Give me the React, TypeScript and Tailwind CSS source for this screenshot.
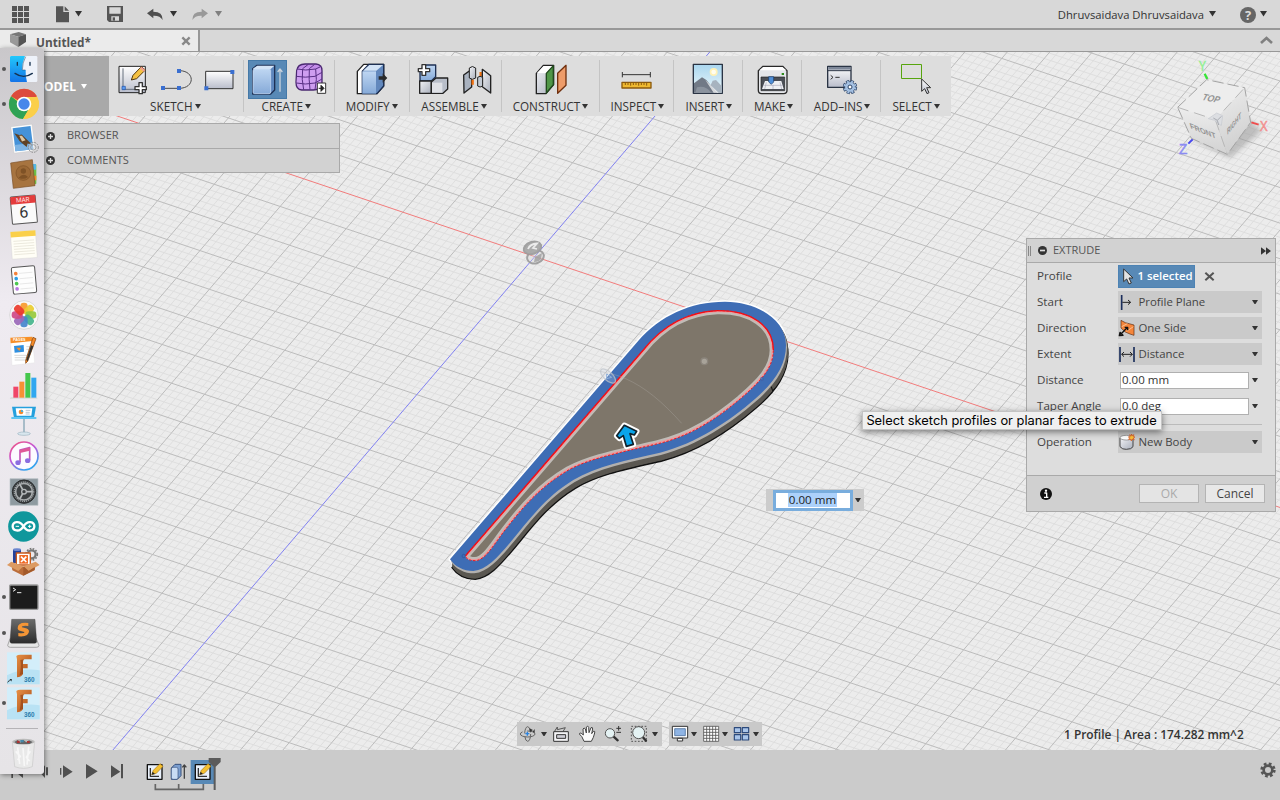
import React from "react";

type P = { children?: React.ReactNode };

/* Icon drawn on a three-units-per-pixel artboard. */
function Ico({ vb, children, className = "" }: P & { vb: string; className?: string }) {
  const [, , w, h] = vb.split(" ").map(Number);
  return (
    <svg width={w / 3} height={h / 3} viewBox={vb} className={`block shrink-0 overflow-visible ${className}`} strokeLinejoin="round">
      {children}
    </svg>
  );
}

function Caret({ className = "text-[#333]", s = 6 }: { className?: string; s?: number }) {
  return (
    <svg width={s} height={s * 0.8} viewBox="0 0 10 8" className={`block shrink-0 ${className}`}>
      <path d="M0 0H10L5 8Z" fill="currentColor" />
    </svg>
  );
}

const O = { x: 534.8, y: 256.6 };
const A = { x: 33.0, y: 11.11 };
const B = { x: -23.6, y: 27.6 };

function Grid() {
  const minor: string[] = [];
  const major: string[] = [];
  for (let k = -200; k <= 200; k++) {
    const t = k / 5;
    const a = `M${(O.x + t * B.x - 45 * A.x).toFixed(1)} ${(O.y + t * B.y - 45 * A.y).toFixed(1)}l${90 * A.x} ${90 * A.y}`;
    const b = `M${(O.x + t * A.x - 45 * B.x).toFixed(1)} ${(O.y + t * A.y - 45 * B.y).toFixed(1)}l${90 * B.x} ${90 * B.y}`;
    if (k === 0) continue;
    (k % 5 === 0 ? major : minor).push(a, b);
  }
  return (
    <g fill="none" strokeWidth="1">
      <path d={minor.join("")} stroke="#dddddd" strokeWidth="0.9" />
      <path d={major.join("")} stroke="#bcbcbc" />
      <path d={`M${O.x - 20 * A.x} ${O.y - 20 * A.y}L${O.x + 30 * A.x} ${O.y + 30 * A.y}`} stroke="#f27c7c" />
      <path d={`M${O.x - 20 * B.x} ${O.y - 20 * B.y}L${O.x + 20 * B.x} ${O.y + 20 * B.y}`} stroke="#8080f0" />
    </g>
  );
}

const OUTER =
  "M60 808L625 152C690 78 780 35 885 35C985 35 1068 92 1068 165C1068 225 1035 275 975 327C900 392 800 460 690 488C590 511 500 528 430 570C340 625 290 700 240 758C200 805 170 838 130 843C100 843 75 830 60 808Z";
const INNER =
  "M106 798L640 180C700 105 770 66 862 62C960 60 1030 105 1030 180C1030 235 990 275 930 327C860 385 780 440 680 462C560 490 480 505 415 540C330 590 275 655 225 720C190 765 165 812 135 812C120 812 110 808 106 798Z";

function Racket() {
  return (
    <g transform="translate(430 290) scale(0.33333)">
      <clipPath id="inner"><path d={INNER} /></clipPath>
      <path d={OUTER} fill="none" stroke="#ffffff" strokeWidth="9" strokeLinejoin="round" />
      {[25, 22, 19, 16, 13, 10].map((d) => (
        <path key={d} d={OUTER} transform={`translate(${6} ${d})`} fill={d === 25 ? "#55534e" : "#5b5852"} stroke={d === 25 ? "#111" : "none"} strokeWidth="4" />
      ))}
      <path d={OUTER} transform="translate(3 7)" fill="#b2b0ae" />
      <path d={OUTER} fill="#3e6db5" />
      <path d={INNER} fill="#7e766a" />
      <path d={INNER} fill="none" stroke="#c0bcb7" strokeWidth="22" clipPath="url(#inner)" />
      <path d={INNER} fill="none" stroke="#ee9a9c" strokeWidth="10" clipPath="url(#inner)" />
      <path d="M106 798L640 180C700 105 770 66 862 62C960 60 1030 105 1030 180" fill="none" stroke="#ee0a12" strokeWidth="4" />
      <path d={INNER} fill="none" stroke="#ef1820" strokeWidth="3" strokeDasharray="7 5" />
      <path d="M410 248C540 225 640 270 755 400" fill="none" stroke="#b5b2ae" strokeWidth="3" opacity=".3" />
      <ellipse cx="534" cy="258" rx="28" ry="13" transform="rotate(42 534 258)" fill="#c8d2e0" fillOpacity=".3" stroke="#bfc5cc" strokeWidth="4" opacity=".75" />
      <path d="M530 252L545 262L530 266Z" fill="none" stroke="#8eafd9" strokeWidth="3" />
      <circle cx="823" cy="214" r="10" fill="#a8a399" stroke="#8b857c" strokeWidth="4" />
      <circle cx="996" cy="267" r="5" fill="none" stroke="#4460a6" strokeWidth="2" />
      <circle cx="101" cy="798" r="5" fill="none" stroke="#2c519a" strokeWidth="2" />
      <path d="M1024 290L1028 303L1034 295" fill="none" stroke="#111" strokeWidth="3" />
      <path d="M583 406L620 424L613 435L600 431L610 463L589 469L580 437L568 445L560 437Z" fill="none" stroke="#fff" strokeWidth="17" strokeLinejoin="round" />
      <path d="M583 406L620 424L613 435L600 431L610 463L589 469L580 437L568 445L560 437Z" fill="#0aa5ea" stroke="#10222c" strokeWidth="5" strokeLinejoin="round" />
    </g>
  );
}

function Viewport() {
  return (
    <svg width="1280" height="698" viewBox="0 52 1280 698" className="absolute inset-0 block">
      <rect y="52" width="1280" height="698" fill="#ececec" />
      <Grid />
      <g fill="none" stroke="#9a9a9a" strokeWidth="2" opacity=".9">
        <ellipse cx="535.500" cy="257" rx="8.500" ry="6.500" transform="rotate(-18 535 257)" fill="#d5d5d5" fillOpacity=".4" />
        <ellipse cx="532.500" cy="248" rx="9" ry="6" transform="rotate(-18 532 248)" fill="#a4a4a4" />
        <path d="M528 249Q530 244 537 243.500L533 248L537 249" stroke="#ececec" strokeWidth="1.800" />
        <path d="M535 257L542 253L541 259Q539 262 534 262Z" fill="#a4a4a4" stroke="none" />
      </g>
      <Racket />
    </svg>
  );
}

function ViewCube() {
  return (
    <svg width="110" height="115" viewBox="450 160 330 345" className="absolute left-[1170px] top-[1px] block font-['Liberation_Sans',sans-serif]">
      <defs>
        <filter id="soft" x="-20%" y="-20%" width="140%" height="140%"><feGaussianBlur stdDeviation="8" /></filter>
        <linearGradient id="cf" x2="0" y2="1"><stop stopColor="#ededed" /><stop offset="1" stopColor="#d2d2d2" /></linearGradient>
        <linearGradient id="cr" x2=".3" y2="1"><stop stopColor="#eeeeee" /><stop offset="1" stopColor="#d0d0d0" /></linearGradient>
      </defs>
      <path d="M520 420L630 475L725 395L690 360Z" fill="#999" opacity=".55" filter="url(#soft)" />
      <path d="M554 222L562 238" stroke="#36e436" strokeWidth="7" />
      <path d="M694 368L716 375" stroke="#ef4c4c" strokeWidth="6" />
      <path d="M519 418L505 432" stroke="#4949ee" strokeWidth="6" />
      <path d="M473 323L560 240L674 264L586 360Z" fill="#ededed" />
      <path d="M473 323L586 360L622 464L514 416Z" fill="url(#cf)" />
      <path d="M586 360L674 264L692 368L622 464Z" fill="url(#cr)" />
      <path d="M473 323L560 240L674 264L692 368L622 464L514 416Z" fill="none" stroke="#a4a4a4" strokeWidth="3" strokeDasharray="34 12" />
      <path d="M473 323L586 360L674 264M586 360L622 464" fill="none" stroke="#b8b8b8" strokeWidth="3" strokeDasharray="34 18" />
      <path d="M565 357L590 340L608 348L604 378L584 362Z" fill="#dcdee2" stroke="#c6c9ce" strokeWidth="2" />
      <path d="M580 355L592 362L604 350M592 362L596 376" fill="none" stroke="#a8abb1" strokeWidth="3" />
      <g fontWeight="bold" fill="#939393">
        <text transform="matrix(.8 .16 -.45 .85 544 300)" fontSize="31">TOP</text>
        <text transform="matrix(.75 .31 .25 .8 512 386)" fontSize="30">FRONT</text>
        <text transform="matrix(.5 -.62 .05 .95 622 406)" fontSize="27">RIGHT</text>
      </g>
      <g fontSize="42" strokeWidth="1.500">
        <text x="536" y="213" fill="#93f093" stroke="#93f093" textLength="22" lengthAdjust="spacingAndGlyphs">Y</text>
        <text x="719" y="394" fill="#f29090" stroke="#f29090" textLength="24" lengthAdjust="spacingAndGlyphs">X</text>
        <text x="477" y="463" fill="#8b8bf2" stroke="#8b8bf2" textLength="25" lengthAdjust="spacingAndGlyphs">Z</text>
      </g>
    </svg>
  );
}

const Defs = () => (
  <svg width="0" height="0" className="absolute">
    <defs>
      <linearGradient id="wh" x2="0" y2="1"><stop stopColor="#fff" /><stop offset="1" stopColor="#b9bdcb" /></linearGradient>
      <linearGradient id="gy" x2="1" y2="1"><stop stopColor="#f2f3f6" /><stop offset="1" stopColor="#a9afbb" /></linearGradient>
      <linearGradient id="bl" x2="0" y2="1"><stop stopColor="#bed6f2" /><stop offset="1" stopColor="#86aad8" /></linearGradient>
      <linearGradient id="sky" x2="0" y2="1"><stop stopColor="#a9d6ef" /><stop offset="1" stopColor="#eef8fb" /></linearGradient>
      <linearGradient id="cg" x2="0" y2="1"><stop stopColor="#22c8fb" /><stop offset="1" stopColor="#1474e8" /></linearGradient>
      <linearGradient id="it" x2=".6" y2="1"><stop stopColor="#f4547a" /><stop offset=".5" stopColor="#c457d8" /><stop offset="1" stopColor="#32a4ee" /></linearGradient>
      <linearGradient id="dk" x2="0" y2="1"><stop stopColor="#6c6c6c" /><stop offset="1" stopColor="#2c2c2c" /></linearGradient>
      <linearGradient id="or" x2="1" y2="1"><stop stopColor="#e89045" /><stop offset="1" stopColor="#a74c18" /></linearGradient>
    </defs>
  </svg>
);

const NAVY = "#1e3054";

const groups: { label: string; w: string; icons: React.ReactNode; gap: string; shift?: string }[] = [
  {
    label: "SKETCH", w: "w-[135px]", gap: "gap-[12px]", shift: "pr-[2px]",
    icons: (
      <>
        <Ico vb="352 189 90 96">
          <rect x="358" y="199" width="79" height="79" fill="url(#wh)" stroke="#222" strokeWidth="3" />
          <path d="M370 205V268H430" fill="none" stroke="#66707f" strokeWidth="3" />
          <rect x="367" y="259" width="10" height="10" fill="#5b9bf0" stroke="#1d4fa8" strokeWidth="2" />
          <path d="M395 240L400 226L425 200L437 210L411 236Z" fill="#f5c142" stroke="#51370f" strokeWidth="3" />
          <path d="M425 200L437 210L432 215L420 205Z" fill="#f0a090" />
          <path d="M418 248h10v12h12v9h-12v12h-10v-12h-12v-9h12Z" fill="#fff" stroke="#333" strokeWidth="4" />
        </Ico>
        <Ico vb="477 189 99 96">
          <path d="M489 265H537C585 265 586 214 540 212" fill="none" stroke="#4b4b4b" strokeWidth="3" />
          <path d="M483 258h12v12h-12ZM531 258h12v12h-12ZM531 207h12v12h-12Z" fill="#3a6fd0" />
        </Ico>
        <Ico vb="611 189 93 96">
          <rect x="616" y="214" width="82" height="52" fill="url(#wh)" stroke="#333" strokeWidth="3" />
          <path d="M612 259h12v12h-12ZM690 210h12v12h-12Z" fill="#3a6fd0" />
        </Ico>
      </>
    ),
  },
  {
    label: "CREATE", w: "w-[91px]", gap: "", shift: "pr-[6px]",
    icons: (
      <div className="flex h-[40px] items-end gap-[8px] pr-[4px]">
        <div className="flex h-[39px] w-[39px] items-center justify-center border border-[#4579a7] bg-[#5889b6]">
          <Ico vb="755 190 96 96">
            <path d="M760 204L773 194H826V268L814 280H760Z" fill="#5d86bd" stroke={NAVY} strokeWidth="4" />
            <path d="M761 204L774 195H825L814 205H761Z" fill="#d5e4f6" />
            <rect x="761" y="205" width="53" height="74" rx="5" fill="url(#bl)" stroke="#cfe1f7" strokeWidth="2" />
            <path d="M842 273V205M835 214L842 205L849 214" fill="none" stroke="#c9d3dd" strokeWidth="4" />
          </Ico>
        </div>
        <Ico vb="885 190 96 96" className="mb-[4px]">
          <path d="M890 213Q893 193 915 193H948Q966 195 966 213V250Q962 270 940 271H905Q888 270 888 248Z" fill="#c28ce8" stroke="#4a2870" strokeWidth="4" />
          <path d="M892 210Q912 198 948 208L963 202V248L948 268H905Q890 265 890 246Z" fill="#d3a5f4" opacity=".7" />
          <path d="M889 230Q915 235 945 230L966 218M889 250Q915 256 945 250L966 238M908 207Q904 240 911 270M928 207Q926 240 930 270M947 208Q952 240 945 270M891 208Q915 214 947 208L964 200M908 207L925 194M928 207L944 194" fill="none" stroke="#593085" strokeWidth="3" />
          <rect x="952" y="250" width="25" height="31" fill="#fff" stroke="#333" strokeWidth="3" />
          <path d="M956 266H966M963 257L972 266L963 275Z" fill="#222" stroke="#222" strokeWidth="3" />
        </Ico>
      </div>
    ),
  },
  {
    label: "MODIFY", w: "w-[75px]", gap: "", shift: "pr-[1px]",
    icons: (
      <Ico vb="78 39 96 96">
        <path d="M82 64L101 43H161V108L141 131H82Z" fill="#fff" stroke="#222" strokeWidth="4" />
        <path d="M97 64L117 43H161V108L141 131H97Z" fill="#6288bd" stroke={NAVY} strokeWidth="4" />
        <path d="M97 64H138V131H97Z" fill="url(#bl)" />
        <path d="M99 62L118 45H159L139 62Z" fill="#d3e3f6" />
        <path d="M146 79H158V70L172 84L158 98V89H146Z" fill="#2a2a2a" />
      </Ico>
    ),
  },
  {
    label: "ASSEMBLE", w: "w-[92px]", gap: "gap-[13px] pr-[2px]", shift: "pr-[3px]",
    icons: (
      <>
        <Ico vb="264 39 93 96">
          <path d="M270 60L287 45H317V80L304 93H270Z" fill="url(#bl)" stroke={NAVY} strokeWidth="4" />
          <path d="M269 93H304V130H269Z" fill="url(#gy)" stroke="#222" strokeWidth="4" />
          <path d="M304 96L318 84H353V117L339 130H304Z" fill="#b8bec9" stroke="#222" strokeWidth="4" />
          <path d="M306 98H337V128H306Z" fill="#dfe1e6" />
          <path d="M276 44h11v12h12v9h-12v11h-11v-11h-11v-9h11Z" fill="#fff" stroke="#333" strokeWidth="4" />
        </Ico>
        <Ico vb="396 39 90 96">
          <path d="M401 75L425 58V111L402 129Z" fill="#a9b2bf" stroke="#222" strokeWidth="4" />
          <path d="M418 54Q427 45 437 54V84Q427 92 418 84Z" fill="url(#gy)" stroke="#222" strokeWidth="3" />
          <path d="M428 89V104M452 66V80" stroke="#f07010" strokeWidth="7" />
          <path d="M457 58L482 77V129L457 110Z" fill="url(#gy)" stroke="#222" strokeWidth="4" />
          <path d="M443 82Q450 76 458 82V108Q450 114 443 108Z" fill="#c4cbd5" stroke="#222" strokeWidth="3" />
        </Ico>
      </>
    ),
  },
  {
    label: "CONSTRUCT", w: "w-[99px]", gap: "", shift: "pr-[1px]",
    icons: (
      <Ico vb="615 39 96 96">
        <path d="M619 70L640 46H671V104L648 131H619Z" fill="url(#gy)" stroke="#222" strokeWidth="4" />
        <path d="M621 69L641 48H668L648 70Z" fill="#fff" />
        <path d="M649 70L670 47V104L649 129Z" fill="#4f9647" stroke="#21491e" strokeWidth="4" />
        <path d="M683 70L708 46V106L683 130Z" fill="#ee9c69" stroke="#70300e" strokeWidth="4" />
      </Ico>
    ),
  },
  {
    label: "INSPECT", w: "w-[74px]", gap: "pr-[2px]", shift: "",
    icons: (
      <Ico vb="-60 39 96 96">
        <path d="M-53 74H31M-53 66V82M31 66V82" stroke="#333" strokeWidth="3" />
        <rect x="-54" y="97" width="87" height="17" fill="#efb92f" stroke="#8c5a0c" strokeWidth="4" />
        <path d="M-44 98v7M-36 98v7M-28 98v9M-20 98v7M-12 98v7M-4 98v9M4 98v7M12 98v7M20 98v9" stroke="#8c5a0c" strokeWidth="3" />
      </Ico>
    ),
  },
  {
    label: "INSERT", w: "w-[69px]", gap: "pr-[1px]",
    icons: (
      <Ico vb="160 39 96 96">
        <rect x="164" y="43" width="87" height="87" fill="url(#sky)" stroke="#2a3444" strokeWidth="4" />
        <circle cx="225" cy="66" r="12" fill="#fff2b8" /><circle cx="225" cy="66" r="7" fill="#fffdf0" />
        <path d="M205 128L222 92L232 90L249 108V128Z" fill="#a7b3bf" />
        <path d="M166 100L190 82L203 90L235 128H166Z" fill="#717986" />
        <path d="M200 90L210 100L240 128H225Z" fill="#fff" opacity=".7" />
        <path d="M175 112Q200 105 218 128H170Z" fill="#8b939e" />
      </Ico>
    ),
  },
  {
    label: "MAKE", w: "w-[59px]", gap: "pl-[1px]", shift: "pl-[2px]",
    icons: (
      <Ico vb="352 39 96 96">
        <path d="M356 62L370 49H429L442 62V121Q442 131 432 131H366Q356 131 356 121Z" fill="#e4e6ea" stroke="#2a2a2a" strokeWidth="4" />
        <path d="M359 61L371 51H428L440 61Z" fill="#fff" />
        <path d="M364 81H435V122H364Z" fill="#4a4e56" stroke="#222" strokeWidth="2" />
        <path d="M376 93H425L432 117H367Z" fill="#eef0f3" />
        <path d="M372 106H429M380 97L375 117M400 105V117M421 97L426 117" stroke="#aab" strokeWidth="2" />
        <path d="M387 80H402V96L395 103L387 96Z" fill="#4f8fd8" stroke="#173866" strokeWidth="2" />
        <rect x="426" y="69" width="7" height="6" fill="#2c8a1a" />
      </Ico>
    ),
  },
  {
    label: "ADD–INS", w: "w-[79px]", gap: "pl-[1px]", shift: "pl-[1px]",
    icons: (
      <Ico vb="558 39 96 96">
        <rect x="563" y="49" width="70" height="63" fill="url(#wh)" stroke="#2a3444" strokeWidth="4" />
        <rect x="565" y="51" width="66" height="8" fill="#7d8798" /><path d="M563 62H633" stroke="#2a3444" strokeWidth="3" />
        <path d="M572 76L579 82L572 88M586 82H599" fill="none" stroke="#333" strokeWidth="3" />
        <circle cx="630" cy="111" r="16" fill="none" stroke="#2c4468" strokeWidth="11" strokeDasharray="8.500 4.060" />
        <circle cx="630" cy="111" r="16" fill="#a4c0e2" stroke="#2c4468" strokeWidth="2" />
        <circle cx="630" cy="111" r="15" fill="none" stroke="#a4c0e2" strokeWidth="9" strokeDasharray="5 6.780" strokeDashoffset="-1.500" />
        <circle cx="630" cy="111" r="6" fill="#fff" stroke="#2c4468" strokeWidth="3" />
      </Ico>
    ),
  },
  {
    label: "SELECT", w: "w-[70px]", gap: "",
    icons: (
      <Ico vb="780 39 96 96">
        <rect x="784.500" y="43.500" width="60" height="42" fill="none" stroke="#57a50e" strokeWidth="3" />
        <path d="M845 87V124L854 116L861 131L867 128L860 113H872Z" fill="url(#wh)" stroke="#333" strokeWidth="3" />
      </Ico>
    ),
  },
];

function Toolbar() {
  return (
    <div className="absolute left-0 top-[4px] flex h-[60px] w-[951px] bg-[#dddddd]">
      <div className="flex w-[109px] items-center justify-end bg-[#a9a9a9] pr-[22px] pt-[1px]">
        <span className="mr-[5px] text-[12px] font-bold text-white">MODEL</span>
        <Caret className="text-white" />
      </div>
      {groups.map((g, i) => (
        <div key={g.label} className={`relative flex flex-col items-center ${g.w}`}>
          <div className={`mt-[3px] flex h-[40px] items-center ${g.gap}`}>{g.icons}</div>
          <div className={`flex h-[15px] items-center gap-[2px] text-[11.700px] leading-[15px] text-[#333] ${g.shift ?? ""}`}>
            {g.label}
            <Caret />
          </div>
          {i < groups.length - 1 && <span className="absolute right-0 top-[4px] h-[52px] w-px bg-[#c4c4c4]" />}
        </div>
      ))}
    </div>
  );
}

const Plus = () => (
  <Ico vb="0 0 27 27">
    <circle cx="13.500" cy="13.500" r="13.500" fill="#333" />
    <path d="M13.500 6V21M6 13.500H21" stroke="#ddd" strokeWidth="4" />
  </Ico>
);

const F360 = ({ arrow = false }: { arrow?: boolean }) => (
  <Ico vb="22 0 98 98">
    <rect x="22" y="1" width="98" height="96" fill="#d3eefa" />
    <path d="M22 70Q70 45 120 55V97H22Z" fill="#b9e2f4" />
    <path d="M50 12Q54 8 62 8H96V22H74Q70 23 70 30V36H84V49H70V66Q64 76 52 76V22Z" fill="url(#or)" />
    <path d="M62 24L74 22Q70 23 70 30V66L60 70Q66 45 62 24Z" fill="#8c3d12" opacity=".6" />
    <text x="73" y="91" fontSize="19" fontWeight="bold" fill="#2a7dac" fontFamily="Liberation Sans, sans-serif">360</text>
    {arrow && <path d="M23 95L25 87L33 84L29 81H36V89L34 85L26 89Z" fill="#111" />}
  </Ico>
);

const photos = ["#f79a2c", "#e9cc30", "#98c93c", "#45b48c", "#4585cc", "#9a68b8", "#cf4a86", "#ea3a2c"];

const dock: { dot?: boolean; icon: React.ReactNode }[] = [
  { dot: true, icon: (
    <Ico vb="29 0 82 78">
      <rect x="29" width="82" height="78" rx="4" fill="#eef2fa" />
      <path d="M33 0H74Q65 20 65 42H76Q75 60 80 78H33Q29 78 29 74V4Q29 0 33 0Z" fill="url(#cg)" />
      <path d="M51 19V28M89 19V28M44 52Q70 70 96 52" fill="none" stroke="#173250" strokeWidth="4" strokeLinecap="round" />
      <path d="M76 2Q66 20 66 42H75" fill="none" stroke="#246" strokeWidth="1.500" />
    </Ico>) },
  { dot: true, icon: (
    <Ico vb="26 0 90 90">
      <circle cx="71" cy="45" r="45" fill="#fbcf4a" />
      <path d="M71 45L32 22A45 45 0 0 1 110 22Z" fill="#dc4a3c" />
      <path d="M32 22A45 45 0 0 0 68 90L90 52H71Z" fill="#2fa255" />
      <path d="M71 24H110A45 45 0 0 1 68 90L92 52Z" fill="#fbcf4a" />
      <circle cx="71" cy="45" r="22" fill="#fff" /><circle cx="71" cy="45" r="17" fill="#4887ea" />
    </Ico>) },
  { icon: (
    <Ico vb="26 0 90 90">
      <g transform="rotate(-7 68 44)">
        <rect x="36" y="4" width="64" height="80" fill="#fdfdfd" stroke="#bbb" />
        <rect x="41" y="9" width="54" height="70" fill="#4592d8" />
        <path d="M41 60H95V79H41Z" fill="#7db4e4" />
        <path d="M44 25L60 33Q64 28 69 35L94 66L80 60L76 70L66 60Q56 52 52 40Z" fill="#5f4224" /><path d="M58 34L66 35L75 50L64 52Z" fill="#dcc7a4" />
      </g>
      <circle cx="99" cy="70" r="15" fill="#ddd" fillOpacity=".4" stroke="#8a8a8a" strokeWidth="3" strokeDasharray="5 3" /><circle cx="99" cy="70" r="8" fill="none" stroke="#8a8a8a" strokeWidth="2" />
    </Ico>) },
  { icon: (
    <Ico vb="26 0 90 90">
      <path d="M90 15L108 17V74L94 78Z" fill="#6cbf45" /><path d="M94 15h13v17h-13Z" fill="#55b6e4" /><path d="M94 50h14v14h-14Z" fill="#f38b2c" />
      <path d="M31 12L96 2L104 80L39 88Z" fill="#a77440" stroke="#7c5027" strokeWidth="2" />
      <circle cx="69" cy="42" r="22" fill="#9c6936" stroke="#7f5226" strokeWidth="2" /><circle cx="69" cy="36" r="8" fill="#7f5226" /><path d="M55 56Q69 40 83 54Q70 64 55 56Z" fill="#7f5226" />
    </Ico>) },
  { icon: (
    <Ico vb="26 0 90 90">
      <g transform="rotate(-5 70 45)">
        <rect x="33" y="3" width="75" height="82" rx="3" fill="#fafafa" stroke="#555" strokeWidth="3" />
        <path d="M33 3h75v23H33Z" fill="#e43c3c" />
        <text x="70" y="21" fontSize="19" fill="#ffe3e3" textAnchor="middle" fontFamily="Roboto, sans-serif">MAR</text>
        <text x="70" y="68" fontSize="48" fill="#333" textAnchor="middle" fontFamily="Roboto, sans-serif">6</text>
      </g>
    </Ico>) },
  { icon: (
    <Ico vb="26 0 90 90">
      <g transform="rotate(-4 70 45)"><rect x="33" y="3" width="75" height="82" fill="#fffef6" stroke="#ccc" /><path d="M33 3h75v17H33Z" fill="#fad04a" />
        <path d="M40 32H102M40 40H102M40 48H102M40 56H102M40 64H102M40 72H102" stroke="#e2dfd2" strokeWidth="2" /></g>
    </Ico>) },
  { icon: (
    <Ico vb="26 0 90 90">
      <g transform="rotate(-5 70 45)"><rect x="36" y="5" width="70" height="80" rx="5" fill="#fdfdfd" stroke="#555" strokeWidth="3" />
        <path d="M58 24H98M58 40H98M58 56H98M58 71H98" stroke="#ddd" strokeWidth="2" />
        <circle cx="48" cy="24" r="5.500" fill="#f5823a" /><circle cx="48" cy="39" r="5.500" fill="#2e9fe6" /><circle cx="48" cy="54" r="5.500" fill="#4cc84e" /><circle cx="48" cy="70" r="5.500" fill="#b877e0" /></g>
    </Ico>) },
  { icon: (
    <Ico vb="26 0 90 90">
      <circle cx="71" cy="45" r="43" fill="#f8f8f8" stroke="#ccc" strokeWidth="2" />
      {photos.map((c, i) => <rect key={c} x="60" y="8" width="22" height="33" rx="10" fill={c} opacity=".92" transform={`rotate(${i * 45} 71 45)`} />)}
    </Ico>) },
  { icon: (
    <Ico vb="26 0 90 90">
      <path d="M30 5L96 2L103 80L35 88Z" fill="#fff" stroke="#ddd" /><path d="M30 5L96 2L97 15L31 22Z" fill="#f78f28" />
      <text x="38" y="16" fontSize="11" fill="#fff" fontWeight="bold" fontFamily="Liberation Sans, sans-serif">PAGES</text>
      <path d="M41 30L70 27L71 47L43 50Z" fill="#2f8fe0" /><path d="M48 35h14l-5 10Z" fill="#f78f28" />
      <path d="M42 58H88M43 65H88M43 72H84M78 32H92M78 40H90" stroke="#c5c5c5" strokeWidth="2" />
      <path d="M98 4L107 8L82 76L76 82L76 73Z" fill="#f58a28" stroke="#7a3a08" strokeWidth="2" /><path d="M92 28L99 31L82 76L78 72Z" fill="#333" />
    </Ico>) },
  { icon: (
    <Ico vb="26 0 90 90">
      <path d="M28 84H112L108 78H32Z" fill="#ddd" />
      <path d="M39 47h15v33h-15Z" fill="#f04668" /><path d="M57 32h15v48h-15Z" fill="#f79134" /><path d="M75 6h15v74h-15Z" fill="#45c74c" /><path d="M93 20h15v60h-15Z" fill="#30a7f0" />
    </Ico>) },
  { icon: (
    <Ico vb="26 0 90 90">
      <path d="M35 2H107L101 35H41Z" fill="#25a0dd" /><path d="M33 33H108V39H33Z" fill="#60c6f2" />
      <path d="M46 7H96L93 29H49Z" fill="#fff" /><circle cx="62" cy="18" r="7" fill="#f28a30" /><path d="M62 18v-7a7 7 0 0 1 7 7Z" fill="#48b0e0" /><path d="M76 13H90M76 19H88M76 24H88" stroke="#9ab" strokeWidth="2" />
      <path d="M71 39V82" stroke="#9bb3c1" strokeWidth="5" /><ellipse cx="71" cy="83" rx="19" ry="5" fill="#d8e6ee" stroke="#9bb3c1" strokeWidth="2" />
    </Ico>) },
  { icon: (
    <Ico vb="26 0 90 90">
      <circle cx="71" cy="45" r="42" fill="#fcfaff" stroke="url(#it)" strokeWidth="5" />
      <path d="M59 64V27L88 20V58" fill="none" stroke="#c457b8" strokeWidth="5" /><path d="M59 27L88 20V29L59 36Z" fill="#e05898" />
      <ellipse cx="53" cy="65" rx="8" ry="7" fill="#8b6ce0" /><ellipse cx="82" cy="59" rx="8" ry="7" fill="#8b6ce0" />
    </Ico>) },
  { icon: (
    <Ico vb="26 0 90 90">
      <rect x="29" y="5" width="84" height="80" fill="#8e9aa0" stroke="#bcc4c8" strokeWidth="2" />
      <circle cx="71" cy="44" r="35" fill="#3c4042" stroke="#2a2c2e" strokeWidth="3" />
      <circle cx="71" cy="44" r="25" fill="none" stroke="#a6aaac" strokeWidth="5" /><circle cx="71" cy="44" r="29" fill="none" stroke="#a6aaac" strokeWidth="4" strokeDasharray="3 3" />
      <circle cx="71" cy="44" r="7" fill="none" stroke="#b6babc" strokeWidth="4" /><path d="M78 44H95M67 50L59 65M67 38L59 23" stroke="#b6babc" strokeWidth="5" />
    </Ico>) },
  { icon: (
    <Ico vb="24 0 93 93">
      <circle cx="70.500" cy="46.500" r="46" fill="#0f979c" />
      <path d="M70.500 46C58 26 38 33 38 46S58 66 70.500 46S103 33 103 46S83 66 70.500 46Z" fill="none" stroke="#fff" strokeWidth="7" />
      <path d="M47 46h10M84 46h10M89 41v10" stroke="#fff" strokeWidth="3" />
    </Ico>) },
  { icon: (
    <Ico vb="22 0 98 90">
      <path d="M40 8h24v40H40Z" fill="#23429c" /><ellipse cx="52" cy="8" rx="12" ry="4" fill="#6b86cf" />
      <circle cx="96" cy="22" r="12" fill="none" stroke="#777" strokeWidth="7" /><circle cx="96" cy="22" r="17" fill="none" stroke="#777" strokeWidth="5" strokeDasharray="5 4" />
      <path d="M50 18h42v36H50Z" fill="#fff" stroke="#c65a1c" strokeWidth="4" /><path d="M59 24h26v26H59Z" fill="#f06a25" />
      <path d="M64 29L80 45M80 29L64 45" stroke="#fff" strokeWidth="5" />
      <path d="M35 50L71 60L108 50L105 70L71 86L38 70Z" fill="#bb6d3a" /><path d="M35 44L71 58L56 72L22 54ZM108 44L71 58L87 72L120 54Z" fill="#dc9a62" /><path d="M71 58V86L105 68V60L87 72Z" fill="#a35a2b" />
    </Ico>) },
  { dot: true, icon: (
    <Ico vb="26 0 90 80">
      <rect x="28" y="3" width="85" height="73" rx="3" fill="#1c1c1c" stroke="#9a9a9a" strokeWidth="4" />
      <path d="M38 12L46 17L38 22M50 26H63" fill="none" stroke="#eee" strokeWidth="3" />
    </Ico>) },
  { dot: true, icon: (
    <Ico vb="22 0 98 90">
      <path d="M31 62L24 82Q25 88 32 88H110Q118 88 118 82L110 62Z" fill="#e6e6e6" stroke="#888" strokeWidth="2" />
      <path d="M36 4H106L111 70Q111 76 105 76H36Q31 76 31 70Z" fill="url(#dk)" stroke="#333" />
      <path d="M86 24V15Q54 11 54 31Q54 38 66 40L74 42Q76 47 56 45V55Q88 58 88 40Q88 33 76 30L67 28Q64 22 86 24Z" fill="#f59636" />
    </Ico>) },
  { icon: <F360 arrow /> },
  { dot: true, icon: <F360 /> },
];

function Dock() {
  return (
    <aside className="absolute left-0 top-[48px] flex h-[726px] w-[44px] flex-col rounded-r-[3px] bg-linear-to-b from-[#c9c7ca] via-[#efebf1] via-35% to-[#e6e4e7] pt-[3px] shadow-[1px_1px_5px_rgba(0,0,0,0.45)]">
      {dock.map((d, i) => (
        <div key={i} className="flex h-[35.250px] shrink-0 items-center pl-[2px]">
          <span className={`h-[4px] w-[4px] rounded-full ${d.dot ? "bg-[#555]" : ""}`} />
          <div className="flex w-[35px] justify-center">{d.icon}</div>
        </div>
      ))}
      <div className="mx-[6px] mt-[7px] h-px bg-[#b5b3b6]" />
      <div className="mt-[9px] flex justify-center pl-[2px]">
        <Ico vb="35 0 69 93">
          <path d="M36 10L43 86Q70 96 96 86L103 10Z" fill="#e9e9e9" stroke="#c9c9c9" strokeWidth="2" />
          <ellipse cx="69.500" cy="11" rx="33" ry="9" fill="#bbb" />
          <path d="M42 12L52 6L60 14L68 5L78 13L86 7L97 12L88 18H50Z" fill="#666" /><path d="M50 8h8v7h-8ZM80 9h8v6h-8Z" fill="#a33" /><path d="M60 6h10v7h-10Z" fill="#48a" />
          <path d="M52 28L58 78M85 26L80 80M68 30L72 84M46 40L60 55L52 66M90 40L78 58L88 70" stroke="#fafafa" strokeWidth="5" opacity=".8" fill="none" />
        </Ico>
      </div>
    </aside>
  );
}

function Row({ label, children }: P & { label: string }) {
  return (
    <div className="flex h-[26px] items-center">
      <span className="w-[80.500px] shrink-0 whitespace-nowrap text-[11.600px] text-[#444]">{label}</span>
      {children}
    </div>
  );
}
const Drop = ({ icon, text }: { icon: React.ReactNode; text: string }) => (
  <div className="flex h-[22px] w-[144px] items-center bg-[#cacaca] pl-px pr-[4px] text-[11.400px] text-[#444]">
    <span className="mr-[4px] flex w-[16px] justify-center">{icon}</span>
    <span className="flex-1">{text}</span>
    <Caret />
  </div>
);
const Field = ({ text }: { text: string }) => (
  <div className="flex items-center gap-[3px] pl-[2.500px]">
    <div className="flex h-[17px] w-[129px] items-center border border-[#b0b0b0] bg-white pl-[1px] text-[11.500px] text-[#333]">{text}</div>
    <Caret />
  </div>
);

function Extrude() {
  return (
    <section className="absolute left-[1026px] top-[186px] flex h-[274px] w-[250px] flex-col border border-[#a9a9a9] bg-[#dddddd]">
      <div className="flex h-[24px] items-center border-b border-[#a9a9a9] bg-[#d2d2d2] pl-[1px] pr-[4px] text-[11px] text-[#555]">
        <span className="mr-[7px] h-[10px] w-[3px] border-x border-[#888]" />
        <Ico vb="0 0 27 27"><circle cx="13.500" cy="13.500" r="13.500" fill="#333" /><path d="M6 13.500H21" stroke="#ddd" strokeWidth="5" /></Ico>
        <span className="ml-[6px] flex-1">EXTRUDE</span>
        <Ico vb="0 0 30 24"><path d="M0 1L15 12L0 23ZM15 1L30 12L15 23Z" fill="#333" /></Ico>
      </div>
      <div className="flex flex-1 flex-col pl-[10px]">
        <Row label="Profile">
          <div className="flex h-[23px] w-[77px] items-center border border-[#4d83b4] bg-[#5889b6] pl-[4px] text-[11.400px] font-semibold whitespace-nowrap text-white">
            <Ico vb="308 112 33 50" className="mr-[4px]"><path d="M310 115V153L319 145L326 160L333 157L326 142H338Z" fill="#e3e3e3" stroke="#333" strokeWidth="3" /></Ico>
            1 selected
          </div>
          <Ico vb="0 0 27 27" className="ml-[10px]"><path d="M1 2L26 25M26 2L1 25" stroke="#555" strokeWidth="6" /></Ico>
        </Row>
        <Row label="Start"><Drop text="Profile Plane" icon={<Ico vb="0 0 45 45"><path d="M8 0V45" stroke="#1c2f5c" strokeWidth="5" /><path d="M10 22H34M27 15L35 22L27 29" fill="none" stroke="#222" strokeWidth="3" /></Ico>} /></Row>
        <Row label="Direction"><Drop text="One Side" icon={<Ico vb="-1 0 45 48"><path d="M5 1L18 8L44 15V46L32 42L18 36L5 24Z" fill="#f5853a" stroke="#5a2a10" strokeWidth="2" /><path d="M7 20L24 11M22 34L42 20" stroke="#fbc090" strokeWidth="3" /><path d="M0 47L2 37L11 46ZM3 44L23 23M16 22H25V31" fill="none" stroke="#111" strokeWidth="4" /></Ico>} /></Row>
        <Row label="Extent"><Drop text="Distance" icon={<Ico vb="0 0 48 45"><path d="M3 0V45M45 0V45" stroke="#1c2f5c" strokeWidth="5" /><path d="M8 22H40M15 15L8 22L15 29M33 15L40 22L33 29" fill="none" stroke="#222" strokeWidth="3" /></Ico>} /></Row>
        <Row label="Distance"><Field text="0.00 mm" /></Row>
        <Row label="Taper Angle"><Field text="0.0 deg" /></Row>
        <div className="mr-[13px] mt-[5px] mb-[4px] h-px shrink-0 bg-[#bbb]" />
        <Row label="Operation"><Drop text="New Body" icon={<Ico vb="0 0 48 48"><path d="M3 12V38Q10 47 22 46Q38 46 42 38V12Z" fill="url(#gy)" stroke="#444" strokeWidth="3" /><ellipse cx="22" cy="11" rx="19" ry="7" fill="#fff" stroke="#777" strokeWidth="2" /><path d="M38 0L39 5L45 2L43 8L48 9L43 12L46 18L39 15L37 21L34 15L29 17L32 11L28 9L34 7L32 2L37 5Z" fill="#fbc23a" stroke="#d8501a" strokeWidth="2" /></Ico>} /></Row>
      </div>
      <div className="flex h-[36px] items-center border-t border-[#a9a9a9] bg-[#d0d0d0] pl-[13px] text-[12px]">
        <Ico vb="0 0 36 36" className="mr-[87px]"><circle cx="18" cy="18" r="18" fill="#111" /><path d="M13 15H20V27M12 28H25" fill="none" stroke="#fff" strokeWidth="4" /><circle cx="18" cy="8" r="3.500" fill="#fff" /></Ico>
        <div className="mr-[6px] flex h-[19px] w-[60px] items-center justify-center border border-[#b4b4b4] bg-[#e4e4e4] text-[#aaa]">OK</div>
        <div className="flex h-[19px] w-[60px] items-center justify-center border border-[#b4b4b4] bg-[#e8e8e8] text-[#444]">Cancel</div>
      </div>
    </section>
  );
}

function NavBar() {
  return (
    <div className="absolute left-[517px] top-[670px] flex h-[24px] gap-[7px]">
      <div className="flex w-[145px] items-center bg-[#c9c9c9] pl-[2px]">
        <Ico vb="57 30 51 54"><ellipse cx="83" cy="57" rx="22" ry="9" fill="none" stroke="#666" strokeWidth="3" strokeDasharray="60 14" /><ellipse cx="83" cy="57" rx="9" ry="22" fill="none" stroke="#666" strokeWidth="3" strokeDasharray="44 8" /><path d="M82 50V62M76 56H88" stroke="#2b83e0" strokeWidth="4" /><path d="M88 40L99 45L90 51ZM98 50L104 42L104 54Z" fill="#333" /></Ico>
        <span className="ml-[5px] mr-[5px]"><Caret /></span>
        <Ico vb="156 30 54 54"><path d="M163 50L172 36V44L196 38L189 50" fill="#ccc" stroke="#555" strokeWidth="3" /><rect x="161" y="50" width="44" height="29" fill="#f4f4f6" stroke="#333" strokeWidth="3" /><rect x="170" y="59" width="27" height="11" fill="#d0d0d8" stroke="#333" strokeWidth="3" /></Ico>
        <Ico vb="234 30 54 54" className="ml-[8px]"><path d="M252 79Q246 62 238 57Q240 50 250 60L249 42Q252 36 256 42L259 54L259 36Q264 30 266 37L267 53L273 38Q278 35 278 42L275 56L281 48Q286 48 284 54Q281 68 274 79Z" fill="#fafafa" stroke="#444" strokeWidth="3" /></Ico>
        <Ico vb="312 30 54 54" className="ml-[8px]"><path d="M341 65L353 76" stroke="#333" strokeWidth="7" strokeLinecap="round" /><circle cx="330" cy="55" r="14" fill="#e4f2f3" stroke="#555" strokeWidth="3" /><path d="M349 40H363M356 33V47M349 52H363" stroke="#333" strokeWidth="3" /></Ico>
        <Ico vb="390 30 54 54" className="ml-[8px]"><rect x="394" y="34" width="45" height="45" fill="none" stroke="#555" strokeWidth="3" strokeDasharray="5 5" /><path d="M426 64L438 77" stroke="#333" strokeWidth="7" strokeLinecap="round" /><circle cx="416" cy="53" r="18" fill="#e4f2f3" stroke="#555" strokeWidth="3" /></Ico>
        <span className="ml-[4px]"><Caret /></span>
      </div>
      <div className="flex w-[93px] items-center bg-[#c9c9c9] pl-[2px]">
        <Ico vb="513 30 54 54"><rect x="517" y="34" width="46" height="35" fill="#fff" stroke="#333" strokeWidth="3" /><rect x="524" y="41" width="32" height="21" fill="#8fb4e4" stroke="#345a8c" strokeWidth="2" /><path d="M532 70H548V78H532Z" fill="#fff" stroke="#333" strokeWidth="3" /></Ico>
        <span className="ml-[2px] mr-[5px]"><Caret /></span>
        <Ico vb="606 30 54 54"><rect x="611" y="34" width="45" height="45" fill="#fff" /><path d="M611 34H656V79H611ZM620 34V79M629 34V79M638 34V79M647 34V79M611 43H656M611 52H656M611 61H656M611 70H656" fill="none" stroke="#555" strokeWidth="2.500" /></Ico>
        <span className="ml-[2px] mr-[5px]"><Caret /></span>
        <Ico vb="699 30 54 54"><path d="M703 38h19v15h-19ZM727 38h19v15h-19ZM703 59h19v16h-19ZM727 59h19v16h-19Z" fill="#a9c5ea" stroke="#2c4a7c" strokeWidth="3.500" /></Ico>
        <span className="ml-[2px]"><Caret /></span>
      </div>
    </div>
  );
}

const SketchMark = () => (
  <>
    <rect x="440" y="74" width="44" height="44" fill="#e9f0fa" stroke="#111" strokeWidth="4" />
    <path d="M449 84V109H475" fill="none" stroke="#333" strokeWidth="4" />
    <path d="M453 104L458 91L478 71L487 79L467 100Z" fill="#f5c030" stroke="#a87818" strokeWidth="2" />
    <path d="M453 104L456 95L463 102Z" fill="#222" />
  </>
);

export default function App() {
  return (
    <div className="relative flex h-[800px] w-[1280px] flex-col overflow-hidden bg-[#ececec] font-['Open_Sans','Noto_Sans',sans-serif]">
      <Defs />
      <header className="flex h-[30px] shrink-0 items-center border-b-2 border-[#989898] bg-[#d8d8d8] pl-[12px] pr-[13px]">
        <Ico vb="0 0 51 51"><path d="M0 0h15v15h-15ZM18 0h15v15h-15ZM36 0h15v15h-15ZM0 18h15v15h-15ZM18 18h15v15h-15ZM36 18h15v15h-15ZM0 36h15v15h-15ZM18 36h15v15h-15ZM36 36h15v15h-15Z" fill="#555" /></Ico>
        <Ico vb="168 20 39 48" className="ml-[27px] mr-[6px]"><path d="M168 21H190V38H207V69H168ZM194 21L207 34H194Z" fill="#555" /></Ico>
        <Caret s={7} />
        <Ico vb="321 21 48 48" className="ml-[25px] mr-[24px]"><path d="M321 21H369V69H327L321 63Z" fill="#555" /><path d="M328 25H362V44H328ZM334 52H357V65H334Z" fill="#d8d8d8" /><path d="M338 55h7v10h-7Z" fill="#555" /></Ico>
        <Ico vb="442 25 48 36" className="mr-[7px]"><path d="M442 41L461 27V36Q490 36 489 61Q481 47 461 48V56Z" fill="#4f4f4f" /></Ico>
        <Caret s={7} />
        <Ico vb="575 25 48 36" className="ml-[15px] mr-[7px]"><path d="M623 41L604 27V36Q575 36 576 61Q584 47 604 48V56Z" fill="#999" /></Ico>
        <Caret s={7} className="text-[#808080]" />
        <span className="ml-auto mr-[5px] pt-[2px] text-[11.250px] text-[#333]">Dhruvsaidava Dhruvsaidava</span>
        <Caret s={7} />
        <span className="ml-[24px] mr-[4px] mt-[2px] flex h-[16px] w-[16px] items-center justify-center rounded-full bg-[#666] text-[13px] font-bold leading-none text-[#ddd]">?</span>
        <Caret s={7} />
      </header>
      <div className="flex h-[22px] shrink-0 items-center border-b border-[#989898] bg-[#d8d8d8]">
        <div className="flex h-[21px] w-[200px] items-center border-r-2 border-[#989898] bg-[#ebebeb] pl-[10px]">
          <Ico vb="30 97 48 45" className="-mt-[2px]"><path d="M30 104L56 97L78 104L55 111Z" fill="#777" /><path d="M30 104L55 111V142L30 128Z" fill="#999" /><path d="M55 111L78 104V127L55 142Z" fill="#555" /></Ico>
          <span className="ml-[10px] flex-1 pt-[4px] text-[11.800px] font-bold text-[#555]">Untitled*</span>
          <Ico vb="0 0 30 30" className="mr-[7px]"><path d="M4 4L26 26M26 4L4 26" stroke="#888" strokeWidth="7" /></Ico>
        </div>
        <Ico vb="0 0 39 27" className="ml-auto mr-[7px]"><path d="M3 21L19.500 6L36 21" fill="none" stroke="#808080" strokeWidth="8" strokeLinejoin="miter" /></Ico>
      </div>
      <main className="relative h-[698px] shrink-0">
        <Viewport />
        <ViewCube />
        <Toolbar />
        <div className="absolute left-0 top-[71px] flex w-[340px] flex-col border border-[#a9a9a9] bg-[#d2d2d2] text-[11px] text-[#555]">
          {["BROWSER", "COMMENTS"].map((t, i) => (
            <div key={t} className={`flex items-center gap-[12px] pl-[45px] ${i ? "h-[23px]" : "h-[25px] border-b border-[#a9a9a9]"}`}>
              <Plus />
              <span className="pb-[1px]">{t}</span>
            </div>
          ))}
        </div>
        <Extrude />
        <div className="absolute left-[766px] top-[437px] flex h-[22px] w-[98px] items-center bg-[#cccccc] pl-[7px]">
          <div className="mr-[2px] flex h-[21px] w-[80px] items-center justify-center border-[3px] border-[#79addd] bg-white text-[11.600px] text-[#222]">
            <span className="mr-px bg-[#acd1fb] px-px leading-[14px]">0.00 mm</span>
          </div>
          <Caret />
        </div>
        <div className="absolute left-[862px] top-[359px] flex h-[19px] w-[300px] items-center justify-center whitespace-nowrap border border-[#c4c4c4] bg-[#f0f0f0] pr-[1px] font-['Inter',sans-serif] text-[12.830px] text-black shadow-[0_2px_7px_rgba(0,0,0,0.5)]">
          Select sketch profiles or planar faces to extrude
        </div>
        <NavBar />
        <div className="absolute left-[1064px] top-[675px] whitespace-nowrap text-[11.900px] font-semibold leading-[14px] text-[#333]">1 Profile | Area : 174.282 mm^2</div>
      </main>
      <footer className="flex h-[50px] shrink-0 bg-[#cbcbcb] pl-[11px] pr-[4px]">
        <Ico vb="33 30 390 90">
          <path d="M34 76V114H39V76ZM69 76V114L46 95ZM135 76V114L118 95ZM138 82H144V106H138ZM180 84H184V104H180ZM189 76V114L218 95ZM258 72V116L293 94ZM333 76V113L361 95ZM363 72H369V115H363Z" fill="#505050" />
        </Ico>
        <Ico vb="430 30 240 135" className="ml-[2.500px]">
          <path d="M570 60h70v72h-70Z" fill="#5889b6" />
          <path d="M464 132V148H608V132M534 132V148" fill="none" stroke="#666" strokeWidth="5" strokeLinejoin="miter" />
          <path d="M512 84L523 73H541V107L530 118H512Z" fill="#7c9fd0" stroke="#36507c" strokeWidth="3" /><rect x="512" y="82" width="20" height="36" rx="5" fill="#c9dcf4" stroke="#36507c" strokeWidth="2" />
          <path d="M551 116V76M545 82L551 75L557 82" fill="none" stroke="#444" strokeWidth="4" />
          <SketchMark />
          <g transform="translate(144 0)"><SketchMark /></g>
          <path d="M624 54H660V66L645 80V150H639V80L624 66Z" fill="#5b5b5b" />
        </Ico>
        <Ico vb="0 0 48 48" className="ml-auto mt-[12px]">
          <circle cx="24" cy="24" r="13" fill="none" stroke="#555" strokeWidth="8" /><circle cx="24" cy="24" r="19" fill="none" stroke="#555" strokeWidth="8" strokeDasharray="8 6.920" />
        </Ico>
      </footer>
      <Dock />
    </div>
  );
}
